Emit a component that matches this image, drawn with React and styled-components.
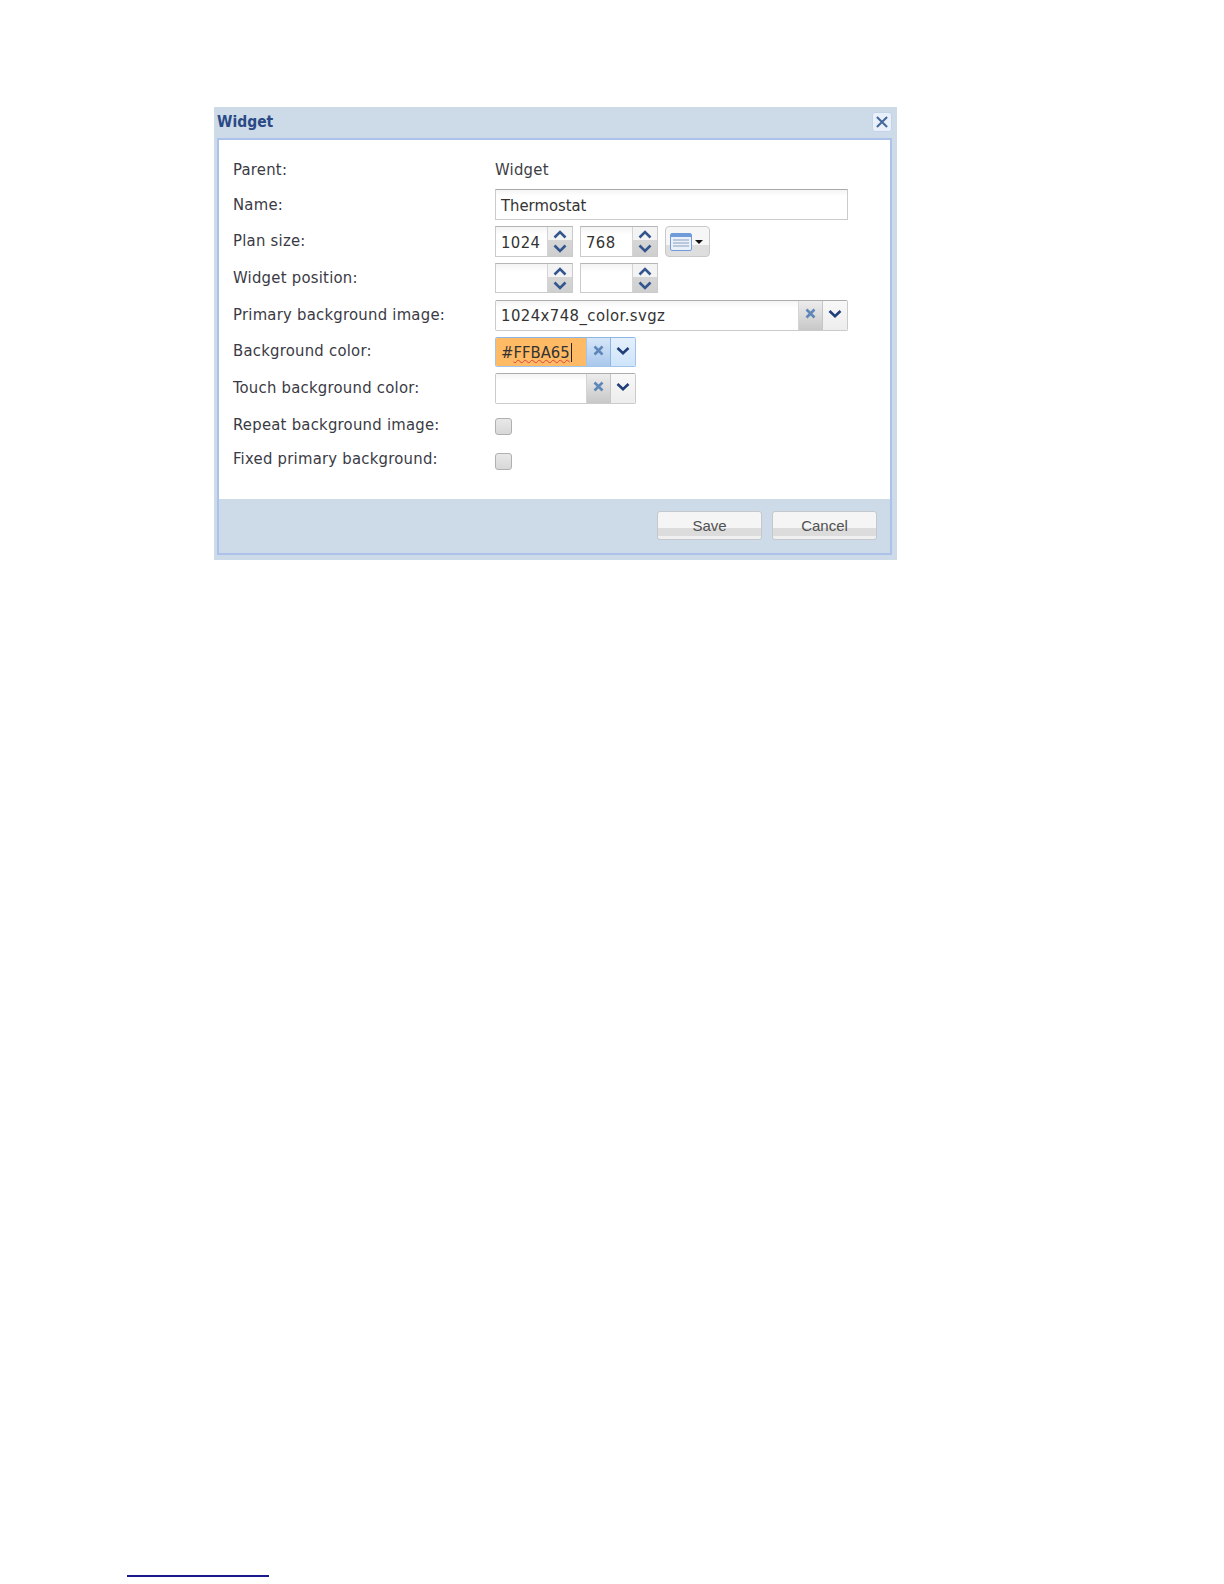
import React from 'react';
import styled, { createGlobalStyle } from 'styled-components';

const Global = createGlobalStyle`
  html, body { margin: 0; padding: 0; background: #fff; }
  body { font-family: "DejaVu Sans", sans-serif; }
`;
const Page = styled.div`
  width: 1224px; height: 1584px; box-sizing: border-box; padding-top: 107px;
  display: flex; flex-direction: column; overflow: hidden;
`;
const Dialog = styled.section`
  width: 683px; height: 453px; flex: none; margin-left: 214px; box-sizing: border-box; background: #cddae8;
  display: flex; flex-direction: column; padding: 0 5px 5px 3px;
`;
const TitleBar = styled.header`
  height: 31px; flex: none; display: flex; align-items: flex-start; justify-content: space-between;
`;
const Title = styled.h1`
  margin: 6px 0 0; font: bold 15.5px/18px "DejaVu Sans Condensed", "DejaVu Sans", sans-serif; color: #2a4a86;
`;
const Close = styled.button`
  width: 20px; height: 20px; padding: 0; margin-top: 5px;
  border: 1px solid #c3d4ea; border-radius: 3px; background: #e9f0f9;
  display: flex; align-items: center; justify-content: center;
`;
const Panel = styled.div`
  flex: 1; border: 2px solid #adc2ea; background: #cddae8; display: flex; flex-direction: column; min-height: 0;
`;
const Body = styled.div`
  height: 359px; flex: none; box-sizing: border-box; background: #fff; padding: 18px 0 0 14px;
  display: flex; flex-direction: column;
`;
const Row = styled.div`
  display: grid; grid-template-columns: 262px 1fr; align-items: center;
  height: ${p => p.$h}px; margin-bottom: ${p => p.$mb ?? 6}px;
`;
const Label = styled.label`
  font: 16.5px "DejaVu Sans Condensed", "DejaVu Sans", sans-serif; letter-spacing: 0.25px; color: #3a3a44; white-space: nowrap;
  position: relative; top: ${p => p.$dy ?? -1}px;
`;
const Static = styled.span`
  font: 16.5px "DejaVu Sans Condensed", "DejaVu Sans", sans-serif; letter-spacing: 0.25px; color: #3d3d45;
  position: relative; top: -1px;
`;
const Controls = styled.div`
  display: flex; align-items: stretch; gap: 7px; height: 100%;
`;
const TextInput = styled.div`
  width: ${p => p.$w}px; box-sizing: border-box; height: 100%; border: 1px solid #cbcbcb; border-top-color: #aaa;
  border-radius: 1px; background: linear-gradient(#f4f4f4, #fff 6px); padding: 2px 5px 0;
  font: 16.5px "DejaVu Sans Condensed", "DejaVu Sans", sans-serif; color: #333; display: flex; align-items: center; white-space: nowrap;
`;
const Spinner = styled.div`
  width: 78px; box-sizing: border-box; display: flex; border: 1px solid #cbcbcb; border-top-color: #b5b5b5; background: #fff;
`;
const SpinText = styled.div`
  flex: 1; display: flex; align-items: center; padding: 2px 0 0 5px; letter-spacing: 0.4px;
  font: 16.5px "DejaVu Sans Condensed", "DejaVu Sans", sans-serif; color: #333; background: linear-gradient(#f3f3f3, #fff 8px);
`;
const SpinButtons = styled.div`
  width: 24px; flex: none; display: flex; flex-direction: column; align-items: center; justify-content: space-around;
  background: linear-gradient(#f3f3f3 0 45%, #d6d6d6 45%, #cfcfcf 100%); border-left: 1px solid #d4d4d4;
`;
const MenuButton = styled.button`
  width: 45px; padding: 0 0 0 4px; border: 1px solid #c9c9c9; border-radius: 4px;
  background: linear-gradient(#f6f6f6 0 62%, #dedede 62%); display: flex; align-items: center; gap: 3px;
`;
const Combo = styled.div`
  width: ${p => p.$w}px; box-sizing: border-box; height: 100%; display: flex; border: 1px solid ${p => p.$active ? '#a3c4ea' : '#cbcbcb'};
  border-top-color: ${p => p.$active ? '#8eb6e4' : '#adadad'}; border-radius: 2px; overflow: hidden; background: #fff;
`;
const ComboText = styled.div`
  flex: 1; display: flex; align-items: center; padding-left: 5px; min-width: 0; letter-spacing: 0.45px;
  font: 16.5px "DejaVu Sans Condensed", "DejaVu Sans", sans-serif; color: #333;
  background: ${p => p.$fill || 'linear-gradient(#f4f4f4, #fff 7px)'};
`;
const Typed = styled.span`
  border-right: 1px solid #222; padding-right: 1px; line-height: 19px; letter-spacing: 0;
`;
const Squiggly = styled.span`
  text-decoration: underline wavy #d9453a 1px; text-underline-offset: 1px;
`;
const ClearBtn = styled.div`
  width: 24px; flex: none; display: flex; justify-content: center; padding-top: 7px; box-sizing: border-box;
  background: ${p => p.$active ? 'linear-gradient(#d6e6f8, #a9c8ec)' : 'linear-gradient(#ececec, #c8c8c8)'};
  border-left: 1px solid ${p => p.$active ? '#a3c4ea' : '#d4d4d4'};
`;
const DropBtn = styled.div`
  width: 25px; flex: none; display: flex; justify-content: center; padding-top: 9px; box-sizing: border-box;
  background: ${p => p.$active ? 'linear-gradient(#e4f0fc, #cfe4fa)' : 'linear-gradient(#f8f8f8, #ededed)'};
  border-left: 1px solid ${p => p.$active ? '#8eb6e4' : '#c6c6c6'};
`;
const Check = styled.span`
  width: 17px; height: 17px; box-sizing: border-box; display: block; border: 1px solid #b0b0b0; border-radius: 3px;
  background: linear-gradient(#e8e8e8, #d8d8d8);
`;
const Footer = styled.footer`
  flex: 1; display: flex; justify-content: flex-end; align-items: flex-start; gap: 10px; padding: 12px 13px 0 0;
`;
const FootButton = styled.button`
  width: 105px; height: 29px; padding: 0 0 1px; border: 1px solid #c4c8cc; border-radius: 3px;
  background: linear-gradient(#f5f5f5 0 58%, #dcdcdc 58% 90%, #f0f0f0 90%);
  font: 15px "Liberation Sans", Arial, sans-serif; color: #505050;
`;
const FootRule = styled.div`
  width: 142px; height: 2px; background: #1a1a8c; margin: 1015px 0 0 127px; flex: none;
`;

const Up = () => (
  <svg width="14" height="9" viewBox="0 0 14 9"><path d="M1.5 7.5 7 2l5.5 5.5" fill="none" stroke="#33568f" strokeWidth="2.6" /></svg>
);
const Down = () => (
  <svg width="14" height="9" viewBox="0 0 14 9"><path d="M1.5 1.5 7 7l5.5-5.5" fill="none" stroke="#33568f" strokeWidth="2.6" /></svg>
);
const X = ({ size = 11, color = '#5f86b8', w = 2.6 }) => (
  <svg width={size} height={size} viewBox="0 0 11 11"><path d="M1.5 1.5l8 8M9.5 1.5l-8 8" fill="none" stroke={color} strokeWidth={w} /></svg>
);
const Chevron = () => (
  <svg width="14" height="8" viewBox="0 0 14 8"><path d="M1.5 1 7 6.2 12.5 1" fill="none" stroke="#1f3f78" strokeWidth="2.6" /></svg>
);
const ListIcon = () => (
  <svg width="22" height="18" viewBox="0 0 22 18">
    <rect x="0.5" y="0.5" width="21" height="17" rx="1.5" fill="#eaf1fb" stroke="#6f9bd8" />
    <rect x="1" y="1" width="20" height="3" fill="#6f9bd8" />
    <path d="M3 7h16M3 10h16M3 13h16" stroke="#8a9fbc" strokeWidth="1" />
  </svg>
);
const Caret = () => (
  <svg width="8" height="4" viewBox="0 0 8 4"><path d="M0 0h8L4 4z" fill="#111" /></svg>
);

const Spin = ({ value }) => (
  <Spinner>
    <SpinText>{value}</SpinText>
    <SpinButtons><Up /><Down /></SpinButtons>
  </Spinner>
);

const ComboBox = ({ w, children, active, fill }) => (
  <Combo $w={w} $active={active}>
    <ComboText $fill={fill}>{children}</ComboText>
    <ClearBtn $active={active}><X /></ClearBtn>
    <DropBtn $active={active}><Chevron /></DropBtn>
  </Combo>
);

export default function App() {
  return (
    <Page>
      <Global />
      <Dialog>
        <TitleBar>
          <Title>Widget</Title>
          <Close aria-label="Close"><X size={14} color="#44689c" w={1.6} /></Close>
        </TitleBar>
        <Panel>
          <Body>
            <Row $h={25}><Label>Parent:</Label><Static>Widget</Static></Row>
            <Row $h={31}><Label $dy={0}>Name:</Label><Controls><TextInput $w={353}>Thermostat</TextInput></Controls></Row>
            <Row $h={31}>
              <Label>Plan size:</Label>
              <Controls>
                <Spin value="1024" />
                <Spin value="768" />
                <MenuButton aria-label="Sizes"><ListIcon /><Caret /></MenuButton>
              </Controls>
            </Row>
            <Row $h={30} $mb={7}><Label>Widget position:</Label><Controls><Spin /><Spin /></Controls></Row>
            <Row $h={31}><Label>Primary background image:</Label><Controls><ComboBox w={353}>1024x748_color.svgz</ComboBox></Controls></Row>
            <Row $h={30}>
              <Label $dy={-2}>Background color:</Label>
              <Controls><ComboBox w={141} active fill="#ffba65"><Typed>#<Squiggly>FFBA65</Squiggly></Typed></ComboBox></Controls>
            </Row>
            <Row $h={31}><Label>Touch background color:</Label><Controls><ComboBox w={141} /></Controls></Row>
            <Row $h={33} $mb={2}><Label $dy={-2}>Repeat background image:</Label><Check /></Row>
            <Row $h={33}><Label $dy={-3}>Fixed primary background:</Label><Check /></Row>
          </Body>
          <Footer>
            <FootButton>Save</FootButton>
            <FootButton>Cancel</FootButton>
          </Footer>
        </Panel>
      </Dialog>
      <FootRule />
    </Page>
  );
}
